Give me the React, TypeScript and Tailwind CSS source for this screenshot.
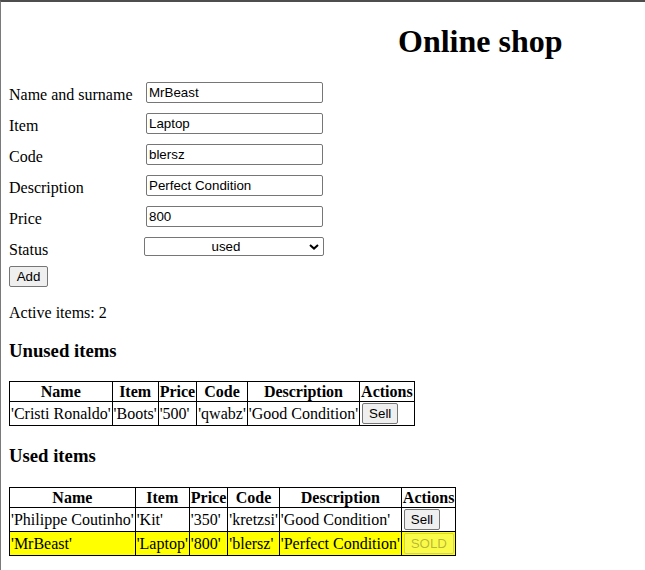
import React from "react";

type Product = {
  name: string;
  item: string;
  price: string;
  code: string;
  description: string;
  sold?: boolean;
};

const unused: Product[] = [
  { name: "Cristi Ronaldo", item: "Boots", price: "500", code: "qwabz", description: "Good Condition" },
];

const used: Product[] = [
  { name: "Philippe Coutinho", item: "Kit", price: "350", code: "kretzsi", description: "Good Condition" },
  { name: "MrBeast", item: "Laptop", price: "800", code: "blersz", description: "Perfect Condition", sold: true },
];

const fields = [
  { label: "Name and surname", value: "MrBeast" },
  { label: "Item", value: "Laptop" },
  { label: "Code", value: "blersz" },
  { label: "Description", value: "Perfect Condition" },
  { label: "Price", value: "800" },
];

const ItemsTable = ({ rows }: { rows: Product[] }) => {
  return (
    <table className="border-collapse border border-black">
      <thead>
        <tr>
          {["Name", "Item", "Price", "Code", "Description", "Actions"].map((h) => (
            <th key={h} className="border border-black p-px font-bold leading-[17px]">
              {h}
            </th>
          ))}
        </tr>
      </thead>
      <tbody>
        {rows.map((r) => (
          <tr key={r.code} className={r.sold ? "bg-[#ffff00]" : ""}>
            <td className="border border-black p-px text-left">'{r.name}'</td>
            <td className="border border-black p-px text-left">'{r.item}'</td>
            <td className="border border-black p-px text-left">'{r.price}'</td>
            <td className="border border-black p-px text-left">'{r.code}'</td>
            <td className="border border-black p-px text-left">'{r.description}'</td>
            <td className="border border-black py-px pl-[2px] pr-px text-left">
              {r.sold ? (
                <button
                  disabled
                  className="h-[21px] w-[50px] rounded-[2px] border border-[rgba(118,118,118,0.3)] bg-[rgba(239,239,239,0.3)] font-['Liberation_Sans',Arial,sans-serif] text-[13.33px] text-[rgba(16,16,16,0.3)] align-middle"
                >
                  SOLD
                </button>
              ) : (
                <button className="h-[21px] rounded-[2px] border border-[#767676] bg-[#efefef] px-[6px] font-['Liberation_Sans',Arial,sans-serif] text-[13.33px] text-black align-middle">
                  Sell
                </button>
              )}
            </td>
          </tr>
        ))}
      </tbody>
    </table>
  );
};

const App = () => {
  return (
    <div className="min-h-[570px] border-l border-t-2 border-l-[#7a7a7a] border-t-[#4d4d4d] bg-white px-2 font-['Liberation_Serif','Times_New_Roman',serif] text-[16px] leading-[18px] text-black">
      <h1 className="mt-[21px] pl-[389px] text-[32px] font-bold leading-[37px]">Online shop</h1>

      <div className="mt-[22px] flex flex-col">
        {fields.map((f) => (
          <div key={f.label} className="flex h-[31px] items-start">
            <label className="w-[137px] pt-[4px]">{f.label}</label>
            <input
              readOnly
              value={f.value}
              className="h-[21px] w-[177px] rounded-[2px] border border-[#767676] px-[2px] font-['Liberation_Sans',Arial,sans-serif] text-[13.33px] text-black"
            />
          </div>
        ))}
        <div className="flex h-[29px] items-start">
          <label className="w-[135px] pt-[4px]">Status</label>
          <div className="relative h-[19px] w-[180px]">
            <select
              defaultValue="used"
              className="h-full w-full appearance-none rounded-[2px] border border-[#767676] bg-white pr-[16px] text-center font-['Liberation_Sans',Arial,sans-serif] text-[13.33px] leading-[17px] text-black [text-align-last:center]"
            >
              <option value="unused">unused</option>
              <option value="used">used</option>
            </select>
            <svg
              className="pointer-events-none absolute right-[5px] top-[7px]"
              width="10"
              height="6"
              viewBox="0 0 10 6"
            >
              <path d="M1 1 L5 4.6 L9 1" fill="none" stroke="#000" strokeWidth="2" />
            </svg>
          </div>
        </div>
        <div>
          <button className="h-[21px] w-[39px] rounded-[2px] border border-[#767676] bg-[#efefef] font-['Liberation_Sans',Arial,sans-serif] text-[13.33px] text-black">
            Add
          </button>
        </div>
      </div>

      <p className="mt-[17px]">Active items: 2</p>

      <h3 className="mt-[18px] text-[18.72px] font-bold leading-[22px]">Unused items</h3>
      <div className="mt-[19px]">
        <ItemsTable rows={unused} />
      </div>

      <h3 className="mt-[19px] text-[18.72px] font-bold leading-[22px]">Used items</h3>
      <div className="mt-[20px]">
        <ItemsTable rows={used} />
      </div>
    </div>
  );
};

export default App;
